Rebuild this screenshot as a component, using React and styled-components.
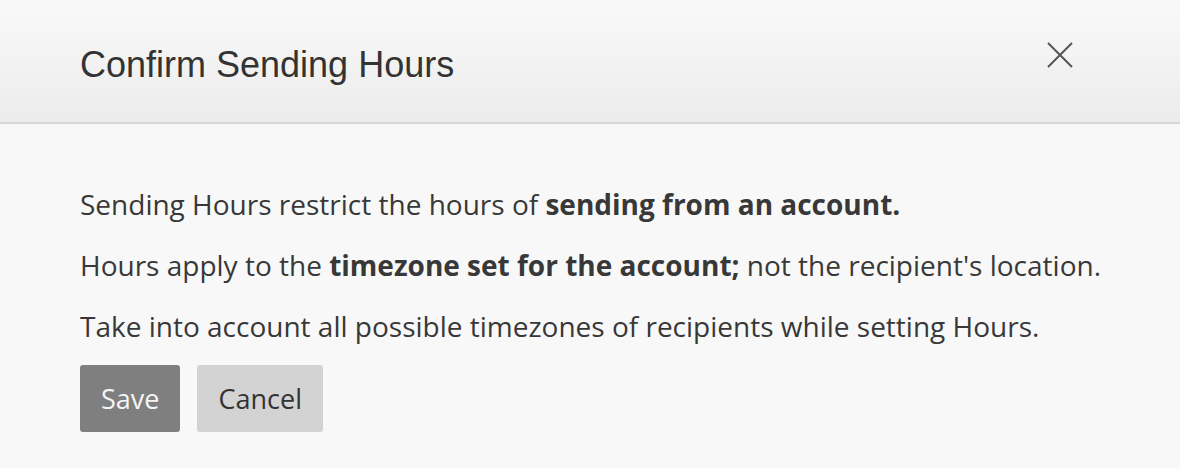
import React from "react";
import styled, { createGlobalStyle } from "styled-components";

const GlobalStyle = createGlobalStyle`
  html, body {
    margin: 0;
    padding: 0;
    background: #f8f8f8;
  }
`;

export default function App() {
  return (
    <>
      <GlobalStyle />
      <Modal>
        <ModalHeader>
          <ModalTitle>Confirm Sending Hours</ModalTitle>
          <CloseBtn aria-label="Close">
            <svg width="28" height="28" viewBox="0 0 28 28">
              <path
                d="M2 2 L26 26 M26 2 L2 26"
                stroke="#555"
                strokeWidth="2"
                fill="none"
              />
            </svg>
          </CloseBtn>
        </ModalHeader>
        <ModalBody>
          <Text>
            Sending Hours restrict the hours of{" "}
            <b>sending from an account.</b>
          </Text>
          <Text>
            Hours apply to the <b>timezone set for the account;</b> not the
            recipient's location.
          </Text>
          <Text>
            Take into account all possible timezones of recipients while
            setting Hours.
          </Text>
          <BtnRow>
            <Btn primary>Save</Btn>
            <Btn>Cancel</Btn>
          </BtnRow>
        </ModalBody>
      </Modal>
    </>
  );
}

const Modal = styled.div`
  width: 1180px;
  height: 468px;
  background: #f8f8f8;
  overflow: hidden;
`;

const ModalHeader = styled.header`
  display: flex;
  align-items: center;
  justify-content: space-between;
  height: 124px;
  padding: 0 106px 0 80px;
  box-sizing: border-box;
  background: linear-gradient(to bottom, #f9f9f9, #ececec);
  border-bottom: 2px solid #d6d6d6;
`;

const ModalTitle = styled.h2`
  margin: 8px 0 0;
  color: #333;
  font-family: "Liberation Sans", Arial, sans-serif;
  font-weight: normal;
  font-size: 36px;
`;

const CloseBtn = styled.button`
  display: flex;
  padding: 0;
  margin-top: -12px;
  border: none;
  background: none;
  cursor: pointer;
`;

const ModalBody = styled.section`
  display: flex;
  flex-direction: column;
  gap: 23px;
  padding: 61px 20px 0 80px;
`;

const Text = styled.p`
  margin: 0;
  color: #383838;
  font-family: "Open Sans", sans-serif;
  font-size: 28px;
  line-height: 38px;
  white-space: nowrap;
`;

const BtnRow = styled.div`
  display: flex;
  gap: 17px;
  margin-top: -3px;
`;

const Btn = styled.button`
  height: 67px;
  padding: 0 21px;
  border: none;
  border-radius: 3px;
  background-color: ${(props) => (props.primary ? "#7f7f7f" : "#d3d3d3")};
  color: ${(props) => (props.primary ? "#f5f5f5" : "#333")};
  font-family: "Open Sans", sans-serif;
  font-size: 27px;
  cursor: pointer;
`;
